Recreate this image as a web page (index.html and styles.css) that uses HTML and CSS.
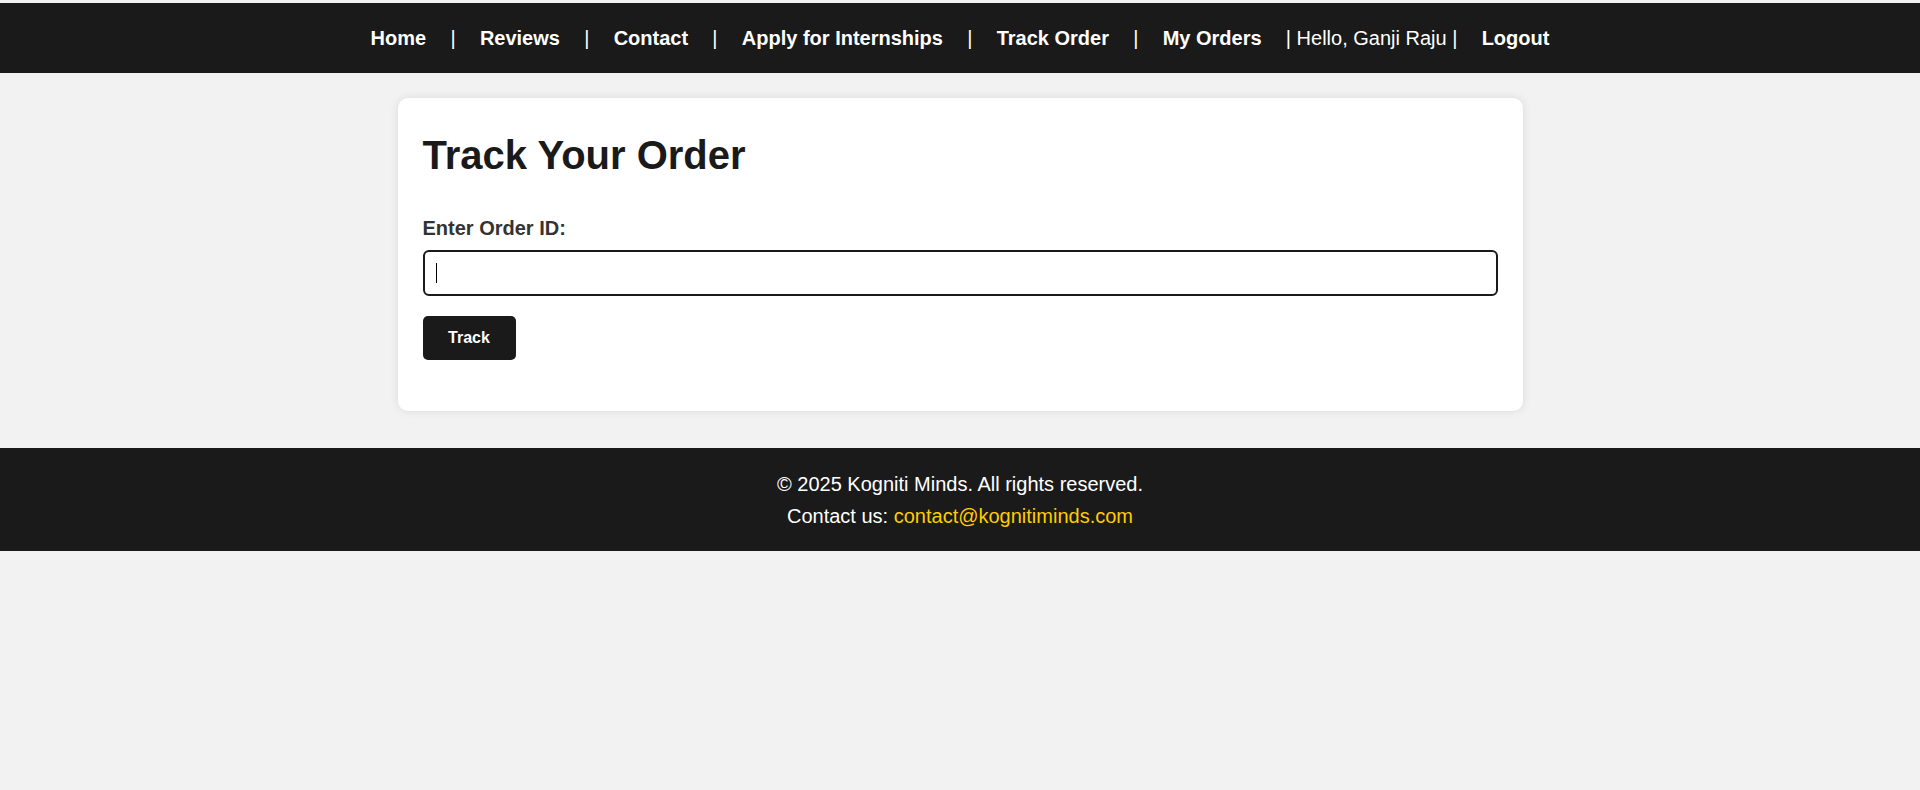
FILE: index.html
```html
<!DOCTYPE html>
<html lang="en">
<head>
<meta charset="utf-8">
<title>Track Your Order</title>
<link rel="stylesheet" href="styles.css">
</head>
<body>
<header class="site-header">
  <nav class="nav">
    <a href="#" class="nav-link">Home</a>
    <span class="sep">|</span>
    <a href="#" class="nav-link">Reviews</a>
    <span class="sep">|</span>
    <a href="#" class="nav-link">Contact</a>
    <span class="sep">|</span>
    <a href="#" class="nav-link">Apply for Internships</a>
    <span class="sep">|</span>
    <a href="#" class="nav-link">Track Order</a>
    <span class="sep">|</span>
    <a href="#" class="nav-link">My Orders</a>
    <span class="hello">| Hello, Ganji Raju |</span>
    <a href="#" class="nav-link">Logout</a>
  </nav>
</header>

<main class="main">
  <section class="card">
    <h1 class="title">Track Your Order</h1>
    <form class="form">
      <label class="label" for="orderId">Enter Order ID:</label>
      <div class="input-wrap">
        <input class="input" id="orderId" type="text">
      </div>
      <button class="btn" type="button">Track</button>
    </form>
  </section>
</main>

<footer class="site-footer">
  <p class="footer-line">© 2025 Kogniti Minds. All rights reserved.</p>
  <p class="footer-line">Contact us: <a href="#" class="footer-link">contact@kognitiminds.com</a></p>
</footer>
</body>
</html>
```

FILE: styles.css
```css
* {
  box-sizing: border-box;
}

html, body {
  margin: 0;
  padding: 0;
}

body {
  background: #f2f2f2;
  font-family: "Liberation Sans", Arial, sans-serif;
  color: #1a1a1a;
  padding-top: 3px;
}

.site-header {
  background: #1a1a1a;
  height: 70px;
  display: flex;
  align-items: center;
  justify-content: center;
}

.nav {
  display: flex;
  align-items: center;
  gap: 24.25px;
  font-size: 20px;
  color: #ffffff;
}

.nav-link {
  color: #ffffff;
  text-decoration: none;
  font-weight: bold;
}

.sep,
.hello {
  color: #ffffff;
  font-weight: normal;
}

.main {
  padding: 25px 0 37px;
}

.card {
  width: 1125px;
  margin: 0 auto;
  background: #ffffff;
  border-radius: 10px;
  padding: 25px;
  box-shadow: 0 0 10px rgba(0, 0, 0, 0.1);
}

.title {
  font-size: 40px;
  font-weight: bold;
  color: #1a1a1a;
  margin: 9px 0 39px;
  line-height: 46px;
}

.form {
  display: flex;
  flex-direction: column;
  align-items: flex-start;
  padding-bottom: 26px;
}

.label {
  display: block;
  font-size: 20px;
  line-height: 23px;
  font-weight: bold;
  color: #333333;
  margin-bottom: 10px;
}

.input-wrap {
  position: relative;
  width: 100%;
}

.input-wrap::after {
  content: "";
  position: absolute;
  left: 13px;
  top: 13px;
  width: 1px;
  height: 20px;
  background: #000000;
}

.input {
  display: block;
  width: 100%;
  height: 46px;
  border: 2px solid #1a1a1a;
  border-radius: 6px;
  padding: 0 12px;
  font-size: 18px;
  font-family: "Liberation Sans", Arial, sans-serif;
  outline: none;
  background: #ffffff;
}

.btn {
  margin-top: 20px;
  width: 93px;
  height: 44px;
  background: #1a1a1a;
  color: #ffffff;
  border: none;
  border-radius: 5px;
  font-size: 16px;
  font-weight: bold;
  font-family: "Liberation Sans", Arial, sans-serif;
  cursor: pointer;
}

.site-footer {
  background: #1a1a1a;
  color: #ffffff;
  text-align: center;
  padding: 20px 0 19px;
  font-size: 20px;
}

.footer-line {
  margin: 0;
  line-height: 32px;
}

.footer-link {
  color: #ffcc00;
  text-decoration: none;
}
```
